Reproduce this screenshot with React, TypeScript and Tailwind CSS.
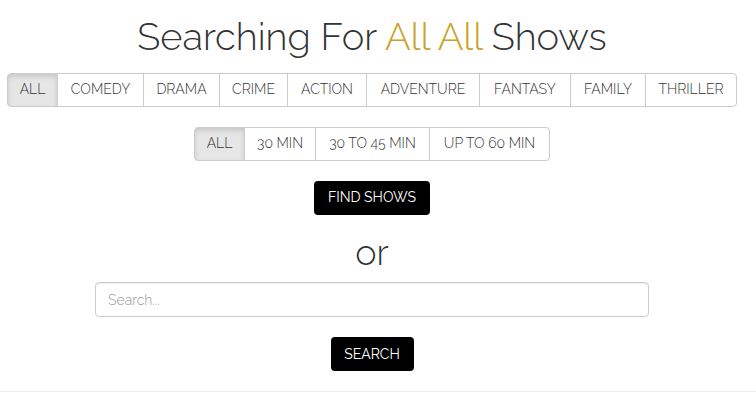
const genres: [string, number][] = [
  ["ALL", 51],
  ["COMEDY", 86],
  ["DRAMA", 76],
  ["CRIME", 68],
  ["ACTION", 79],
  ["ADVENTURE", 113],
  ["FANTASY", 91],
  ["FAMILY", 75],
  ["THRILLER", 91],
];
const lengths: [string, number][] = [
  ["ALL", 51],
  ["30 MIN", 71],
  ["30 TO 45 MIN", 114],
  ["UP TO 60 MIN", 120],
];

function Group({ items }: { items: [string, number][] }) {
  return (
    <div className="inline-flex">
      {items.map(([label, w], i) => (
        <button
          key={label + i}
          style={{ width: w + (i === 0 ? 0 : 1) }}
          className={
            "h-[34px] text-[14px] text-[#333] border border-[#ccc] -ml-px first:ml-0 first:rounded-l-[4px] last:rounded-r-[4px] " +
            (i === 0 ? "bg-[#e6e6e6] shadow-[inset_0_3px_5px_rgba(0,0,0,0.125)] border-[#adadad]" : "bg-white")
          }
        >
          {label}
        </button>
      ))}
    </div>
  );
}

export default function App() {
  return (
    <div className="min-h-screen bg-white text-[#333] font-['Raleway','Lato',sans-serif] font-light">
      <div className="pr-3 text-center">
        <h1 className="mt-4 mb-[15px] text-[38px] leading-[1.1] font-light">
          Searching For <span className="text-[#c9a227]">All All</span> Shows
        </h1>
        <Group items={genres} />
        <div className="mt-5">
          <Group items={lengths} />
        </div>
        <div className="mt-5">
          <button className="h-[34px] w-[116px] rounded-[4px] bg-black text-white text-[14px] font-normal">FIND SHOWS</button>
        </div>
        <h1 className="mt-[18px] mb-[10px] text-[36px] leading-[1.1] font-light">or</h1>
        <div className="px-[95px]">
          <input
            placeholder="Search..."
            className="block w-full h-[35px] px-3 text-[14px] border border-[#ccc] rounded-[4px] shadow-[inset_0_1px_1px_rgba(0,0,0,0.075)] placeholder:text-[#999] outline-none"
          />
        </div>
        <div className="mt-5">
          <button className="h-[34px] w-[83px] rounded-[4px] bg-black text-white text-[14px] font-normal">SEARCH</button>
        </div>
      </div>
      <hr className="mt-5 border-t border-[#eee]" />
    </div>
  );
}
